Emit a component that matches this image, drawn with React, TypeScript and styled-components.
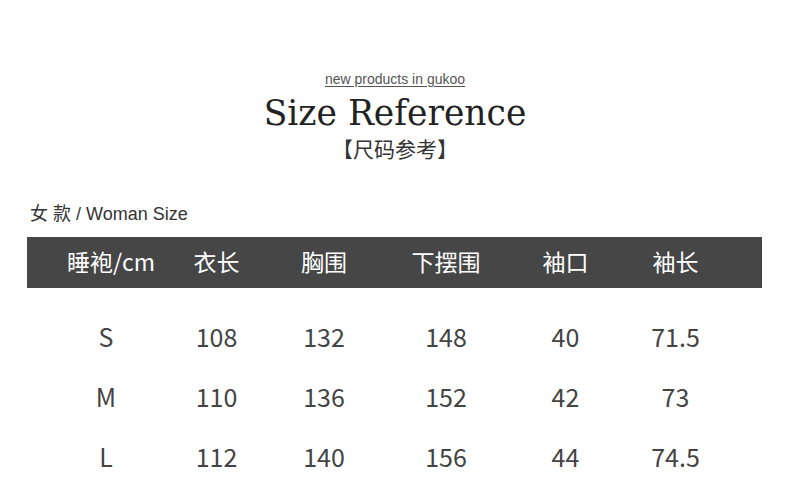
import React from 'react';
import styled, { createGlobalStyle } from 'styled-components';

const Global = createGlobalStyle`
  body {
    margin: 0;
    background: #fff;
    font-family: "Liberation Sans", "Noto Sans CJK SC", sans-serif;
  }
`;

const Page = styled.div`
  width: 790px;
  height: 500px;
  overflow: hidden;
  padding-top: 71px;
  box-sizing: border-box;
`;

const Head = styled.div`
  display: flex;
  flex-direction: column;
  align-items: center;
`;

const Tagline = styled.div`
  font-size: 14px;
  line-height: 16px;
  color: #555;
  text-decoration: underline;
  text-underline-offset: 2px;
`;

const Title = styled.h1`
  margin: 6px 0 0;
  font-family: "DejaVu Serif", serif;
  font-weight: normal;
  font-size: 34.5px;
  line-height: 40px;
  color: #222;
`;

const Subtitle = styled.div`
  margin-top: 2px;
  font-family: "Noto Sans CJK SC", sans-serif;
  font-size: 21px;
  line-height: 26px;
  color: #333;
`;

const Section = styled.div`
  margin: 43px 28px 0 27px;
`;

const Label = styled.div`
  padding-left: 3px;
  font-size: 18px;
  line-height: 20px;
  color: #333;
`;

const Columns = styled.div`
  display: grid;
  grid-template-columns: 128px 83px 132px 112px 127px 93px;
  padding-left: 20px;
  box-sizing: border-box;
  justify-items: center;
  align-items: center;
  font-family: "Noto Sans CJK SC", sans-serif;
`;

const HeaderBar = styled(Columns)`
  margin-top: 13px;
  height: 51px;
  padding-bottom: 4px;
  background: #464646;
  color: #fff;
  font-size: 23px;
`;

const Row = styled(Columns)<{ $first?: boolean }>`
  height: 60px;
  padding-bottom: 4px;
  margin-top: ${(p) => (p.$first ? '20px' : '0')};
  color: #444;
  font-size: 25px;
`;

const Cell = styled.div`
  white-space: nowrap;
`;

// size letters sit a little left of the header label
const SizeCell = styled(Cell)`
  margin-right: 10px;
`;

const headers = ['睡袍/cm', '衣长', '胸围', '下摆围', '袖口', '袖长'];
const rows = [
  ['S', '108', '132', '148', '40', '71.5'],
  ['M', '110', '136', '152', '42', '73'],
  ['L', '112', '140', '156', '44', '74.5'],
];

export default function App() {
  return (
    <Page>
      <Global />
      <Head>
        <Tagline>new products in gukoo</Tagline>
        <Title>Size Reference</Title>
        <Subtitle>【尺码参考】</Subtitle>
      </Head>
      <Section>
        <Label>女 款 / Woman Size</Label>
        <HeaderBar>
          {headers.map((h) => (
            <Cell key={h}>{h}</Cell>
          ))}
        </HeaderBar>
        {rows.map(([size, ...vals], i) => (
          <Row key={size} $first={i === 0}>
            <SizeCell>{size}</SizeCell>
            {vals.map((v, j) => (
              <Cell key={j}>{v}</Cell>
            ))}
          </Row>
        ))}
      </Section>
    </Page>
  );
}
